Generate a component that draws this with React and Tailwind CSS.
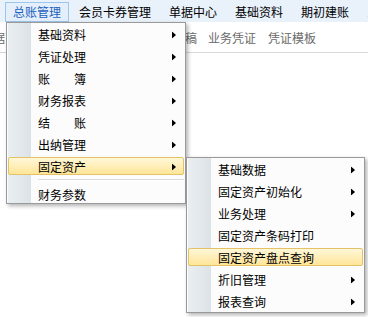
import React from "react";

const Arrow = () => (
  <svg className="absolute right-[9px] top-1/2 -translate-y-1/2" width="4" height="7" viewBox="0 0 4 7">
    <path d="M0 0 L4 3.5 L0 7 Z" fill="#000" />
  </svg>
);

function Item({ label, arrow, active, spread }) {
  return (
    <div className="relative h-[22px] flex items-center pl-[31px]">
      {active && (
        <div className="absolute left-[1px] right-[1px] top-[1px] h-[18px] rounded-[2px] border border-[#e3c268] bg-gradient-to-b from-[#fff7d8] to-[#ffe597]" />
      )}
      {spread ? (
        <span className="relative flex justify-between w-[48px]">
          <span>{spread[0]}</span>
          <span>{spread[1]}</span>
        </span>
      ) : (
        <span className="relative">{label}</span>
      )}
      {arrow && <Arrow />}
    </div>
  );
}

export default function App() {
  const top = ["总账管理", "会员卡券管理", "单据中心", "基础资料", "期初建账", "系统维护"];
  return (
    <div className="relative w-[368px] h-[317px] overflow-hidden bg-white text-[12px] leading-none text-black font-['Noto_Sans_CJK_SC','Microsoft_YaHei',sans-serif]">
      <div className="h-[22px] bg-[#e9f1fb] flex items-start pt-[2px] pl-[5px] gap-[2px] whitespace-nowrap">
        {top.map((t, i) => (
          <div
            key={t}
            className={
              i === 0
                ? "h-[20px] flex items-center px-[7px] border border-[#9cc7ec] bg-[#e4effb] text-[#1d5fbf]"
                : "h-[20px] flex items-center px-[7px] border border-transparent"
            }
          >
            {t}
          </div>
        ))}
      </div>
      <div className="h-[31px] border-b border-[#d8d8d8] flex items-center text-[#6a6a6a] whitespace-nowrap pt-[2px]">
        <span className="ml-[-19px]">单据</span>
        <span className="ml-[144px]">凭证草稿</span>
        <span className="ml-[11px]">业务凭证</span>
        <span className="ml-[12px]">凭证模板</span>
      </div>

      <div className="absolute left-[6px] top-[22px] w-[180px] h-[182px] border border-[#9a9a9a] bg-[#fcfcfc] overflow-hidden pt-[1px] shadow-[2px_2px_4px_rgba(0,0,0,0.3)]">
        <div className="absolute left-[1px] top-0 bottom-0 w-[23px] bg-gradient-to-r from-[#eaeef1] to-[#dce3e7]" />
        <Item label="基础资料" arrow />
        <Item label="凭证处理" arrow />
        <Item spread={["账", "簿"]} arrow />
        <Item label="财务报表" arrow />
        <Item spread={["结", "账"]} arrow />
        <Item label="出纳管理" arrow />
        <Item label="固定资产" arrow active />
        <div className="relative h-[6px] pt-[1px] pl-[31px] pr-[1px]">
          <div className="h-[1px] bg-[#dcdcdc]" />
          <div className="h-[1px] bg-white" />
        </div>
        <Item label="财务参数" />
      </div>

      <div className="absolute left-[186px] top-[157px] w-[179px] h-[156px] border border-[#9a9a9a] bg-[#fcfcfc] overflow-hidden pt-[1px] shadow-[2px_2px_4px_rgba(0,0,0,0.3)]">
        <div className="absolute left-[1px] top-0 bottom-0 w-[23px] bg-gradient-to-r from-[#eaeef1] to-[#dce3e7]" />
        <Item label="基础数据" arrow />
        <Item label="固定资产初始化" arrow />
        <Item label="业务处理" arrow />
        <Item label="固定资产条码打印" />
        <Item label="固定资产盘点查询" active />
        <Item label="折旧管理" arrow />
        <Item label="报表查询" arrow />
      </div>
    </div>
  );
}
